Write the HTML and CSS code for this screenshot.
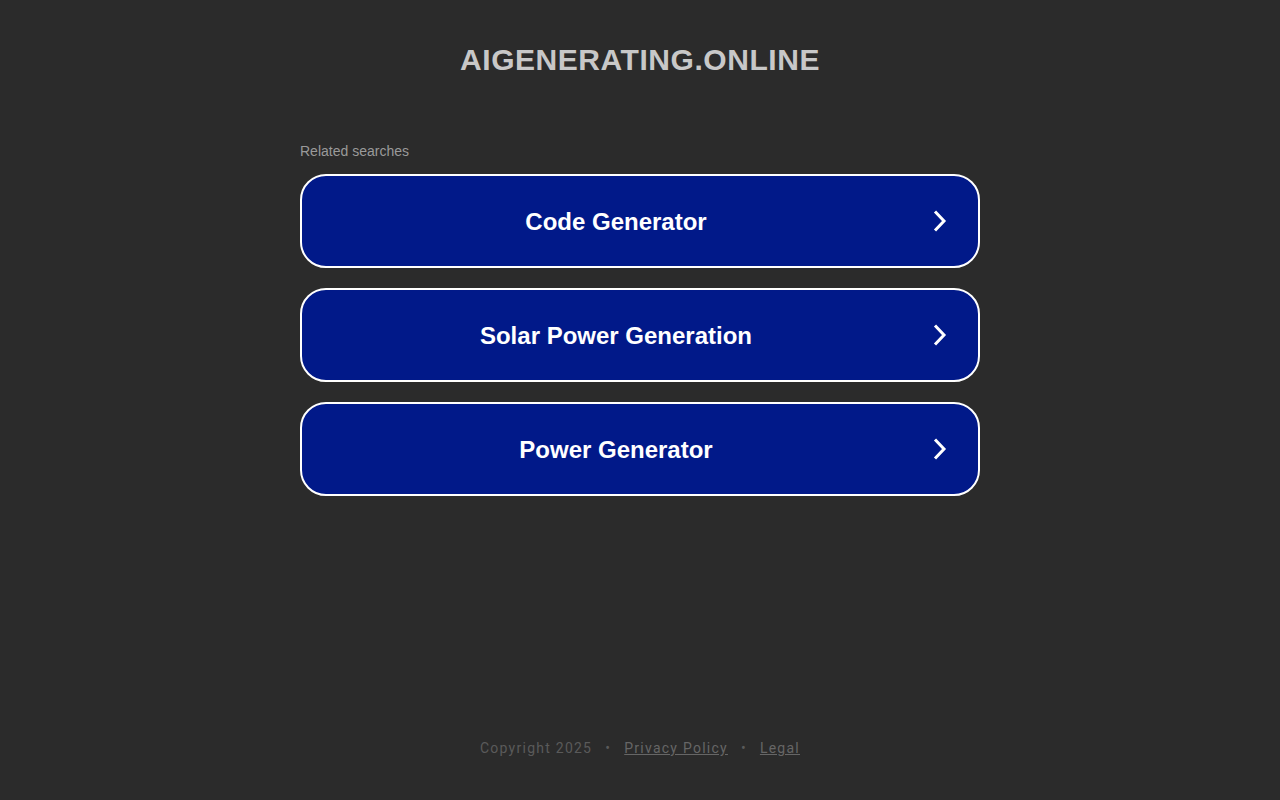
FILE: index.html
```html
<!DOCTYPE html>
<html>
<head>
<meta charset="utf-8">
<link rel="stylesheet" href="styles.css">
</head>
<body>
<div class="page">
  <header class="header"><h1 class="domain">AIGENERATING.ONLINE</h1></header>
  <main class="main">
    <div class="related">Related searches</div>
    <div class="list">
      <a class="item" href="#"><span class="label">Code Generator</span><svg class="chev" width="16" height="24" viewBox="0 0 16 24"><path d="M3 2.5 L12 12 L3 21.5" fill="none" stroke="#fff" stroke-width="3"/></svg></a>
      <a class="item" href="#"><span class="label">Solar Power Generation</span><svg class="chev" width="16" height="24" viewBox="0 0 16 24"><path d="M3 2.5 L12 12 L3 21.5" fill="none" stroke="#fff" stroke-width="3"/></svg></a>
      <a class="item" href="#"><span class="label">Power Generator</span><svg class="chev" width="16" height="24" viewBox="0 0 16 24"><path d="M3 2.5 L12 12 L3 21.5" fill="none" stroke="#fff" stroke-width="3"/></svg></a>
    </div>
  </main>
  <footer class="footer">
    <span>Copyright 2025</span><span class="dot">•</span><a href="#">Privacy Policy</a><span class="dot">•</span><a href="#">Legal</a>
  </footer>
</div>
</body>
</html>
```
FILE: styles.css
```css
html, body { margin: 0; padding: 0; }
body {
  background: #2b2b2b;
  font-family: "Liberation Sans", Arial, sans-serif;
  width: 1280px;
  height: 800px;
  overflow: hidden;
}
.page {
  display: flex;
  flex-direction: column;
  align-items: center;
  height: 800px;
}
.header { padding-top: 41px; }
.domain {
  margin: 0;
  font-size: 30px;
  line-height: 38px;
  font-weight: 700;
  color: #c8c8c8;
  letter-spacing: 0.55px;
}
.main {
  width: 680px;
  margin-top: 64px;
}
.related {
  font-size: 14px;
  line-height: 16px;
  color: #9a9a9a;
  margin-bottom: 15px;
}
.list { display: flex; flex-direction: column; gap: 20px; }
.item {
  display: flex;
  align-items: center;
  box-sizing: border-box;
  height: 94px;
  border: 2px solid #fff;
  border-radius: 26px;
  background: #011989;
  text-decoration: none;
  padding: 0 30px 0 30px;
}
.label {
  flex: 1;
  text-align: center;
  color: #fff;
  font-size: 24px;
  font-weight: 700;
  padding-right: 32px;
  padding-top: 2px;
}
.chev { flex: none; }
.footer {
  margin-top: auto;
  margin-bottom: 44px;
  font-family: Roboto, sans-serif;
  font-size: 14px;
  line-height: 16px;
  letter-spacing: 1.25px;
  color: #5a5a5a;
}
.footer a { color: #666; text-decoration: underline; }
.dot { margin: 0 13px; }
```
